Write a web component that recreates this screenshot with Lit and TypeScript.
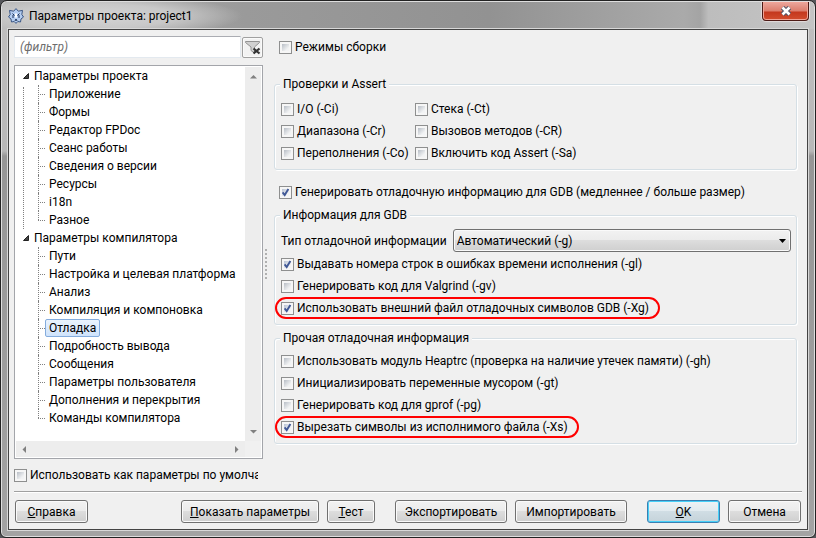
import { LitElement, html, css } from "lit";
import { customElement, property } from "lit/decorators.js";

const SECTIONS = [
  {
    title: "Параметры проекта",
    items: ["Приложение", "Формы", "Редактор FPDoc", "Сеанс работы", "Сведения о версии", "Ресурсы", "i18n", "Разное"],
  },
  {
    title: "Параметры компилятора",
    items: [
      "Пути", "Настройка и целевая платформа", "Анализ", "Компиляция и компоновка", "Отладка",
      "Подробность вывода", "Сообщения", "Параметры пользователя", "Дополнения и перекрытия", "Команды компилятора",
    ],
  },
];
const CURRENT = "Отладка";

const CHECKS = ["I/O (-Ci)", "Стека (-Ct)", "Диапазона (-Cr)", "Вызовов методов (-CR)", "Переполнения (-Co)", "Включить код Assert (-Sa)"];

@customElement("check-option")
class CheckOption extends LitElement {
  @property() label = "";
  @property({ type: Boolean }) checked = false;
  @property({ type: Boolean }) marked = false;

  static styles = css`
    :host { display: block; min-width: 0; }
    label { display: flex; align-items: center; height: 22px; gap: 3px; white-space: nowrap; overflow: hidden; }
    label.marked {
      width: fit-content; margin: 0 0 0 -6px; padding: 0 9px 0 4px; overflow: visible;
      border: 2px solid #f00; border-radius: 12px; box-sizing: border-box;
    }
    input {
      appearance: none; flex: none; width: 13px; height: 13px; margin: 0; box-sizing: border-box;
      border: 1px solid #8e8f8f;
      background: linear-gradient(135deg, #b8bec6, #f2f3f4 75%) 2px 2px / 7px 7px no-repeat, #f6f6f6;
    }
    input:checked {
      background: url('data:image/svg+xml,<svg xmlns="http://www.w3.org/2000/svg" viewBox="0 0 11 11"><path d="M2.6 5.3 4.7 8 8.4 2" fill="none" stroke="%23405896" stroke-width="1.9"/></svg>') 0 0 / 11px 11px no-repeat,
        linear-gradient(135deg, #b8c2d4, #f2f3f4 75%) 2px 2px / 7px 7px no-repeat, #f6f6f6;
    }
  `;

  render() {
    return html`<label class=${this.marked ? "marked" : ""}><input type="checkbox" .checked=${this.checked} /><span>${this.label}</span></label>`;
  }
}

@customElement("app-root")
class AppRoot extends LitElement {
  static styles = css`
    * { box-sizing: border-box; }
    :host { display: block; font: 12px/18px Roboto, "Noto Sans", sans-serif; color: #000; background: #55565a; }
    .window {
      display: flex; flex-direction: column; min-height: 100vh; padding: 0 7px 7px;
      border: 1px solid #222; border-radius: 7px 7px 6px 6px;
      box-shadow: inset 0 0 0 1px #dedede;
      background: linear-gradient(#c0bfbf, #b8b8b8 150px, #969696 155px, #a3a3a3);
    }
    .titlebar {
      display: flex; align-items: center; gap: 5px; height: 27px; margin: 1px -6px 0; padding: 0 5px 0 6px;
      border-radius: 5px 5px 0 0;
      background: radial-gradient(ellipse 150px 22px at 90px 14px, #d5d5d5, #c8c8c8 55%, transparent),
        linear-gradient(90deg, #b5b5b5, #9a9a9a 30%, #929292 60%, #aaa 84%, #a4a4a4 86%, #bdbdbd 87%, #c4c4c4);
    }
    h1 { flex: 1; margin: 0; font: inherit; }
    .logo { width: 16px; height: 16px; }
    .close {
      align-self: flex-start; width: 47px; height: 19px; padding: 0; border: 1px solid #4d1a15; border-top: 0;
      border-radius: 0 0 4px 4px; box-shadow: inset 0 0 0 1px #f0a497, 0 0 1px 1px #e4dcdc;
      background: linear-gradient(#eca79d, #dc7d6c 9px, #c4371d 10px, #d24d2e);
      display: grid; place-items: center;
    }
    .client {
      flex: 1; display: flex; flex-direction: column; padding: 6px 5px; background: #f0f0f0;
      border: 1px solid #444; box-shadow: 0 0 0 1px #d8d8d8;
    }
    .body { flex: 1; display: grid; grid-template-columns: 249px 11px minmax(0, 1fr); }
    .left { display: flex; flex-direction: column; }
    .filter { display: flex; align-items: center; gap: 1px; margin-bottom: 7px; }
    .filter input {
      flex: 1; min-width: 0; height: 22px; padding: 0 5px; border: 1px solid #e3e9ef; border-top-color: #abadb3;
      font: inherit; font-style: italic; background: #fff;
    }
    .filter input::placeholder { color: #6d6d6d; opacity: 1; }
    .filter button {
      width: 21px; height: 21px; padding: 0; border: 1px solid #a0a0a0; border-radius: 2px;
      background: #f2f2f2; box-shadow: inset 0 0 0 1px #fafafa; display: grid; place-items: center;
    }
    .tree {
      flex: 1; display: grid; grid-template-columns: minmax(0, 1fr) 16px; grid-template-rows: 1fr 16px;
      border: 1px solid #a3a5aa; padding: 1px; background: #fff;
    }
    ul { list-style: none; margin: 0; padding: 0; }
    .roots { padding: 0 0 0 7px; }
    .root { position: relative; }
    .root:first-child::before {
      content: ""; position: absolute; left: 0; top: 20px; bottom: 0; border-left: 1px dotted #808080;
    }
    .head { display: flex; align-items: center; height: 18px; gap: 5px; }
    .items { padding-left: 15px; }
    .items li { position: relative; display: flex; align-items: center; height: 18px; }
    .items li::before { content: ""; width: 7px; border-top: 1px dotted #808080; }
    .items li::after { content: ""; position: absolute; left: 0; top: 0; height: 18px; border-left: 1px dotted #808080; }
    .items li:last-child::after { height: 9px; }
    .items a {
      color: #000; text-decoration: none; line-height: 16px; padding: 0 3px; border: 1px solid transparent;
      border-radius: 2px; white-space: nowrap;
    }
    .items a.current { border-color: #84acdd; background: linear-gradient(#eaf3fd, #cfe3fb); }
    .bar { background: #ededed; display: flex; justify-content: space-between; align-items: center; }
    .vbar { flex-direction: column; padding: 6px 0; }
    .hbar { padding: 0 5px; }
    .corner { background: #f0f0f0; }
    .default { display: block; height: 32px; padding: 5px 5px 0 0; }
    .grip {
      align-self: center; justify-self: start; margin-left: 2px; width: 2px; height: 30px;
      background: repeating-linear-gradient(#b0b0b0 0 2px, transparent 2px 4px);
    }
    .right { padding: 0 5px 0 0; }
    .outer { padding-left: 5px; }
    fieldset {
      min-width: 0; margin: 0; padding: 5px 5px 5px 6px; border: 1px solid #d5dfe5; border-radius: 3px;
      box-shadow: 1px 1px 0 #fff, inset 1px 1px 0 #fff;
    }
    legend { padding: 0 3px; height: 18px; background: #f0f0f0; margin-left: -1px; }
    .checks { display: grid; grid-template-columns: 134px minmax(0, 1fr); }
    .first { margin: 17px 0 11px; }
    .gdb { margin: 3px 0 4px; }
    .other { padding-top: 3px; }
    .type { display: flex; align-items: center; gap: 6px; margin-bottom: 1px; }
    select, .actions button {
      height: 23px; font: inherit; color: #000; border: 1px solid #707070; border-radius: 3px;
      background: linear-gradient(#f2f2f2, #ebebeb 50%, #dddddd 50%, #cfcfcf); box-shadow: inset 0 0 0 1px #fafafa;
    }
    select { appearance: none; flex: 1; min-width: 0; padding: 0 4px 0 3px; }
    .combo { position: relative; display: flex; flex: 1; min-width: 0; }
    .combo svg { position: absolute; right: 5px; top: 10px; pointer-events: none; }
    .actions {
      display: flex; gap: 8px; padding: 8px 1px 0; border-top: 1px solid #a0a0a0; box-shadow: inset 0 1px 0 #fff;
    }
    .actions button { min-width: 48px; padding: 0 8px; white-space: nowrap; }
    .actions .wide { min-width: 73px; }
    .actions .transfer { min-width: 112px; }
    .actions .push { margin-left: auto; }
    .actions .sep { margin-left: 12px; }
    .actions .ok { border-color: #3c7fb1; box-shadow: inset 0 0 0 1px #46d0f8; background: linear-gradient(#eef3f5, #e0eaef 50%, #d0dde4 50%, #c5d3da); }
  `;

  private arrow(d: string) {
    return html`<svg width="7" height="7" viewBox="0 0 7 7" aria-hidden="true"><path d=${d} fill="#808080" /></svg>`;
  }

  render() {
    return html`
      <div class="window">
        <header class="titlebar">
          <svg class="logo" viewBox="0 0 16 16" aria-hidden="true">
            <path d="M8 .6 10.3 3.2 14.5 2.4 13.8 6.5 15.5 9 13 11 12.5 14 9.8 13.5 8 15.4 6.2 13.5 3.5 14 3 11 .5 9 2.2 6.5 1.5 2.4 5.7 3.2Z" fill="#b4cdf0" stroke="#3a5684" />
            <path d="M4.5 5.5 6.500 7.500M11.500 5.500 9.500 7.500M5 7v3M11 7v3M7 13 8 11 9 13" fill="none" stroke="#1c3156" />
            <path d="M7 5.5h2v4H7Z" fill="#fff" />
          </svg>
          <h1>Параметры проекта: project1</h1>
          <button class="close" aria-label="Закрыть">
            <svg width="12" height="10" viewBox="0 0 12 10"><path d="M2.5 1.5 9.5 8.5M9.5 1.5 2.5 8.5" stroke="#4e5568" stroke-width="4.6" /><path d="M2.5 1.5 9.5 8.5M9.5 1.5 2.5 8.5" stroke="#fff" stroke-width="2.6" /></svg>
          </button>
        </header>
        <main class="client">
          <div class="body">
            <div class="left">
              <div class="filter">
                <input type="text" aria-label="Фильтр" placeholder="(фильтр)" />
                <button aria-label="Очистить фильтр">
                  <svg width="17" height="17" viewBox="0 0 17 17"><path d="M1.5 2.5h14v1L10.5 8v6L7 11.5V8L1.5 3.5Z" fill="#d0d0d0" stroke="#929292" /><path d="m9.5 9.5 6 5m0-5-6 5" stroke="#333" stroke-width="2.2" /></svg>
                </button>
              </div>
              <div class="tree">
                <ul class="roots">
                  ${SECTIONS.map((s) => html`
                    <li class="root">
                      <div class="head">
                        <svg width="6" height="6" viewBox="0 0 6 6" aria-hidden="true"><path d="M5.5.5v5h-5Z" fill="#444" stroke="#222" /></svg>
                        <span>${s.title}</span>
                      </div>
                      <ul class="items">
                        ${s.items.map((i) => html`<li><a href="#" class=${i === CURRENT ? "current" : ""}>${i}</a></li>`)}
                      </ul>
                    </li>`)}
                </ul>
                <div class="bar vbar">${this.arrow("M0 5.5 3.5 2 7 5.5Z")}${this.arrow("M0 2 3.5 5.5 7 2Z")}</div>
                <div class="bar hbar">${this.arrow("M5 0 1.5 3.5 5 7Z")}${this.arrow("M2 0 5.5 3.5 2 7Z")}</div>
                <div class="corner"></div>
              </div>
              <check-option class="default" label="Использовать как параметры по умолчанию"></check-option>
            </div>
            <div class="grip"></div>
            <div class="right">
              <check-option class="outer" label="Режимы сборки"></check-option>
              <fieldset class="first">
                <legend>Проверки и Assert</legend>
                <div class="checks">${CHECKS.map((c) => html`<check-option label=${c}></check-option>`)}</div>
              </fieldset>
              <check-option class="outer" checked label="Генерировать отладочную информацию для GDB (медленнее / больше размер)"></check-option>
              <fieldset class="gdb">
                <legend>Информация для GDB</legend>
                <div class="type">
                  <label for="kind">Тип отладочной информации</label>
                  <div class="combo">
                    <select id="kind"><option>Автоматический (-g)</option></select>
                    <svg width="7" height="4" viewBox="0 0 7 4" aria-hidden="true"><path d="M0 0h7L3.5 4Z" /></svg>
                  </div>
                </div>
                <check-option checked label="Выдавать номера строк в ошибках времени исполнения (-gl)"></check-option>
                <check-option label="Генерировать код для Valgrind (-gv)"></check-option>
                <check-option checked marked label="Использовать внешний файл отладочных символов GDB (-Xg)"></check-option>
              </fieldset>
              <fieldset class="other">
                <legend>Прочая отладочная информация</legend>
                <check-option label="Использовать модуль Heaptrc (проверка на наличие утечек памяти) (-gh)"></check-option>
                <check-option label="Инициализировать переменные мусором (-gt)"></check-option>
                <check-option label="Генерировать код для gprof (-pg)"></check-option>
                <check-option checked marked label="Вырезать символы из исполнимого файла (-Xs)"></check-option>
              </fieldset>
            </div>
          </div>
          <footer class="actions">
            <button class="wide"><u>С</u>правка</button>
            <button class="push"><u>П</u>оказать параметры</button>
            <button><u>Т</u>ест</button>
            <button class="sep transfer">Экспортировать</button>
            <button class="transfer">Импортировать</button>
            <button class="wide ok sep"><u>O</u>K</button>
            <button class="wide">Отмена</button>
          </footer>
        </main>
      </div>
    `;
  }
}
